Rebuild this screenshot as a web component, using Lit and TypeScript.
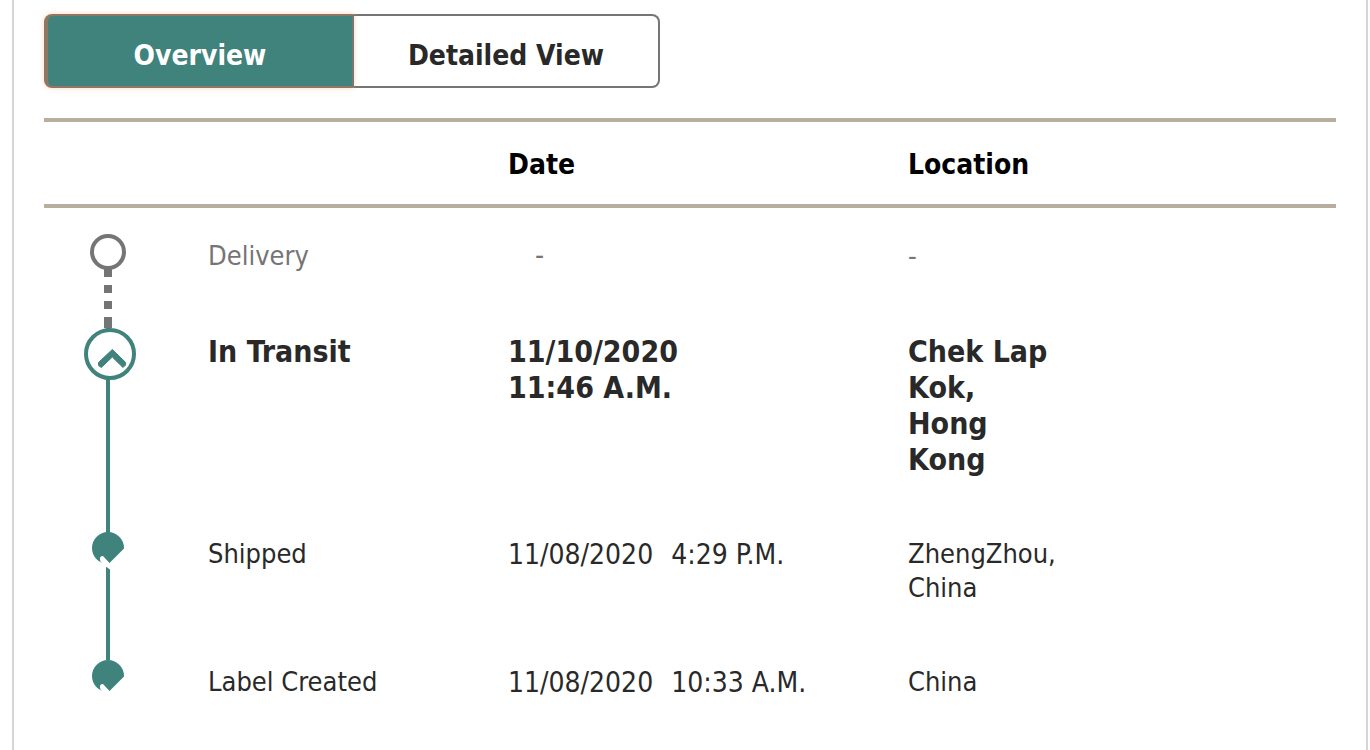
import { LitElement, html, css, svg, nothing } from "lit";
import { customElement, state } from "lit/decorators.js";

type Stage = "pending" | "current" | "done";

interface Milestone {
  label: string;
  stage: Stage;
  date: string[];
  location: string[];
}

const milestones: Milestone[] = [
  { label: "Delivery", stage: "pending", date: ["-"], location: ["-"] },
  {
    label: "In Transit",
    stage: "current",
    date: ["11/10/2020", "11:46 A.M."],
    location: ["Chek Lap", "Kok,", "Hong", "Kong"],
  },
  { label: "Shipped", stage: "done", date: ["11/08/2020", "4:29 P.M."], location: ["ZhengZhou,", "China"] },
  { label: "Label Created", stage: "done", date: ["11/08/2020", "10:33 A.M."], location: ["China"] },
];

@customElement("app-root")
export class AppRoot extends LitElement {
  static styles = css`
    :host {
      display: block;
      font-family: "DejaVu Sans Condensed", Tahoma, "Noto Sans", sans-serif;
      font-size: 28px;
      line-height: 34px;
      color: #292929;
      background: #fff;
    }
    * {
      box-sizing: border-box;
    }
    .panel {
      margin: 0 2px 0 12px;
      padding: 14px 30px 0;
      min-height: 100vh;
      border: solid #d5d5d5;
      border-width: 0 2px;
    }
    .tabs {
      display: flex;
      width: 616px;
      max-width: 100%;
      margin-bottom: 30px;
    }
    .tab {
      flex: 1;
      margin: 0;
      padding: 23px 12px 13px;
      border: 2px solid #757575;
      border-left: 0;
      border-radius: 0 8px 8px 0;
      background: #fff;
      color: #292929;
      font: inherit;
      font-weight: bold;
    }
    .tab.selected {
      z-index: 1;
      border: 2px solid #8f7764;
      border-left-width: 4px;
      border-right-color: #7a7572;
      border-radius: 8px 0 0 8px;
      background: #40827c;
      color: #fff;
      box-shadow: 0 0 5px rgba(230, 150, 90, 0.4);
    }
    .history {
      width: 100%;
      border-spacing: 0;
      table-layout: fixed;
      text-align: left;
    }
    .col-marker {
      width: 164px;
    }
    .col-label {
      width: 300px;
    }
    .col-date {
      width: 400px;
    }
    .heading {
      padding: 26px 0 22px;
      border: solid #b9ad9e;
      border-width: 4px 0;
      color: #000;
    }
    .cell {
      padding: 5px 0 55px;
      vertical-align: top;
      font-size: 27px;
      font-weight: normal;
    }
    .cell.date {
      font-size: 28px;
      padding: 6px 0 54px;
    }
    .pending .cell,
    .pending .cell.date {
      padding-top: 31px;
      color: #757575;
    }
    .current .cell,
    .current .cell.date {
      padding: 6px 0 54px;
      font-size: 30px;
      line-height: 36px;
      font-weight: bold;
    }
    .row .cell.track {
      padding: 0 0 0 48px;
      line-height: 0;
    }
    .current .cell.track {
      padding-left: 40px;
    }
    .pending .cell.track {
      padding: 26px 0 0 46px;
      background: repeating-linear-gradient(to top, #757575 0 11px, #fff 11px 19px, #757575 19px 27px, #fff 27px 35px, #757575 35px 43px, #fff 43px 51px, #757575 51px 59px) 60px 100% / 8px 59px no-repeat;
    }
    .linked .track {
      background: linear-gradient(#40827c, #40827c) 62px 0 / 4px 100% no-repeat;
    }
    .marker {
      display: block;
    }
    .when {
      display: flex;
      flex-wrap: wrap;
      column-gap: 18px;
    }
    .current .when {
      flex-direction: column;
    }
    .pending .when {
      padding-left: 27px;
    }
  `;

  @state() private selected = "Overview";

  private marker(stage: Stage) {
    if (stage === "pending") {
      return html`<svg class="marker" width="36" height="36" viewBox="0 0 36 36" aria-hidden="true">
        ${svg`<circle cx="18" cy="18" r="16" fill="#fff" stroke="#757575" stroke-width="4"/>`}
      </svg>`;
    }
    if (stage === "current") {
      return html`<svg class="marker" width="52" height="52" viewBox="0 0 52 52" aria-hidden="true">
        ${svg`<circle cx="26" cy="26" r="24" fill="#fff" stroke="#40827c" stroke-width="4"/>
        <path d="M28.3 21.500 L41.700 34.500 L41.500 37 L39 39.500 L28.3 29 L17.300 39.500 L14.500 37.500 L14.500 34.500 Z" fill="#40827c" stroke="#40827c" stroke-linejoin="round"/>`}
      </svg>`;
    }
    return html`<svg class="marker" width="32" height="40" viewBox="0 0 32 40" aria-hidden="true">
      ${svg`<circle cx="16" cy="16" r="16" fill="#40827c"/>
      <path d="M11 24 L17.5 31 L32 16.500 V33 L20 39 L18 37.500 L13 34 L8.500 29.500 Q6.500 24 11 24 Z" fill="#fff"/>`}
    </svg>`;
  }

  private lines(parts: string[]) {
    return parts.map((part, i) => html`${i ? html`<br />` : nothing}${part}`);
  }

  render() {
    return html`
      <main class="panel">
        <div class="tabs" role="tablist">
          ${["Overview", "Detailed View"].map(
            (name) => html`<button
              class="tab ${this.selected === name ? "selected" : ""}"
              role="tab"
              aria-selected=${this.selected === name}
              @click=${() => (this.selected = name)}
            >${name}</button>`
          )}
        </div>
        <table class="history">
          <colgroup>
            <col class="col-marker" />
            <col class="col-label" />
            <col class="col-date" />
            <col />
          </colgroup>
          <thead>
            <tr>
              <td class="heading"></td>
              <td class="heading"></td>
              <th class="heading" scope="col">Date</th>
              <th class="heading" scope="col">Location</th>
            </tr>
          </thead>
          <tbody>
            ${milestones.map(
              (m, i) => html`<tr
                class="row ${m.stage} ${m.stage !== "pending" && i < milestones.length - 1 ? "linked" : ""}"
              >
                <td class="cell track">${this.marker(m.stage)}</td>
                <th class="cell" scope="row">${m.label}</th>
                <td class="cell date"><div class="when">${m.date.map((part) => html`<span>${part}</span>`)}</div></td>
                <td class="cell">${this.lines(m.location)}</td>
              </tr>`
            )}
          </tbody>
        </table>
      </main>
    `;
  }
}
